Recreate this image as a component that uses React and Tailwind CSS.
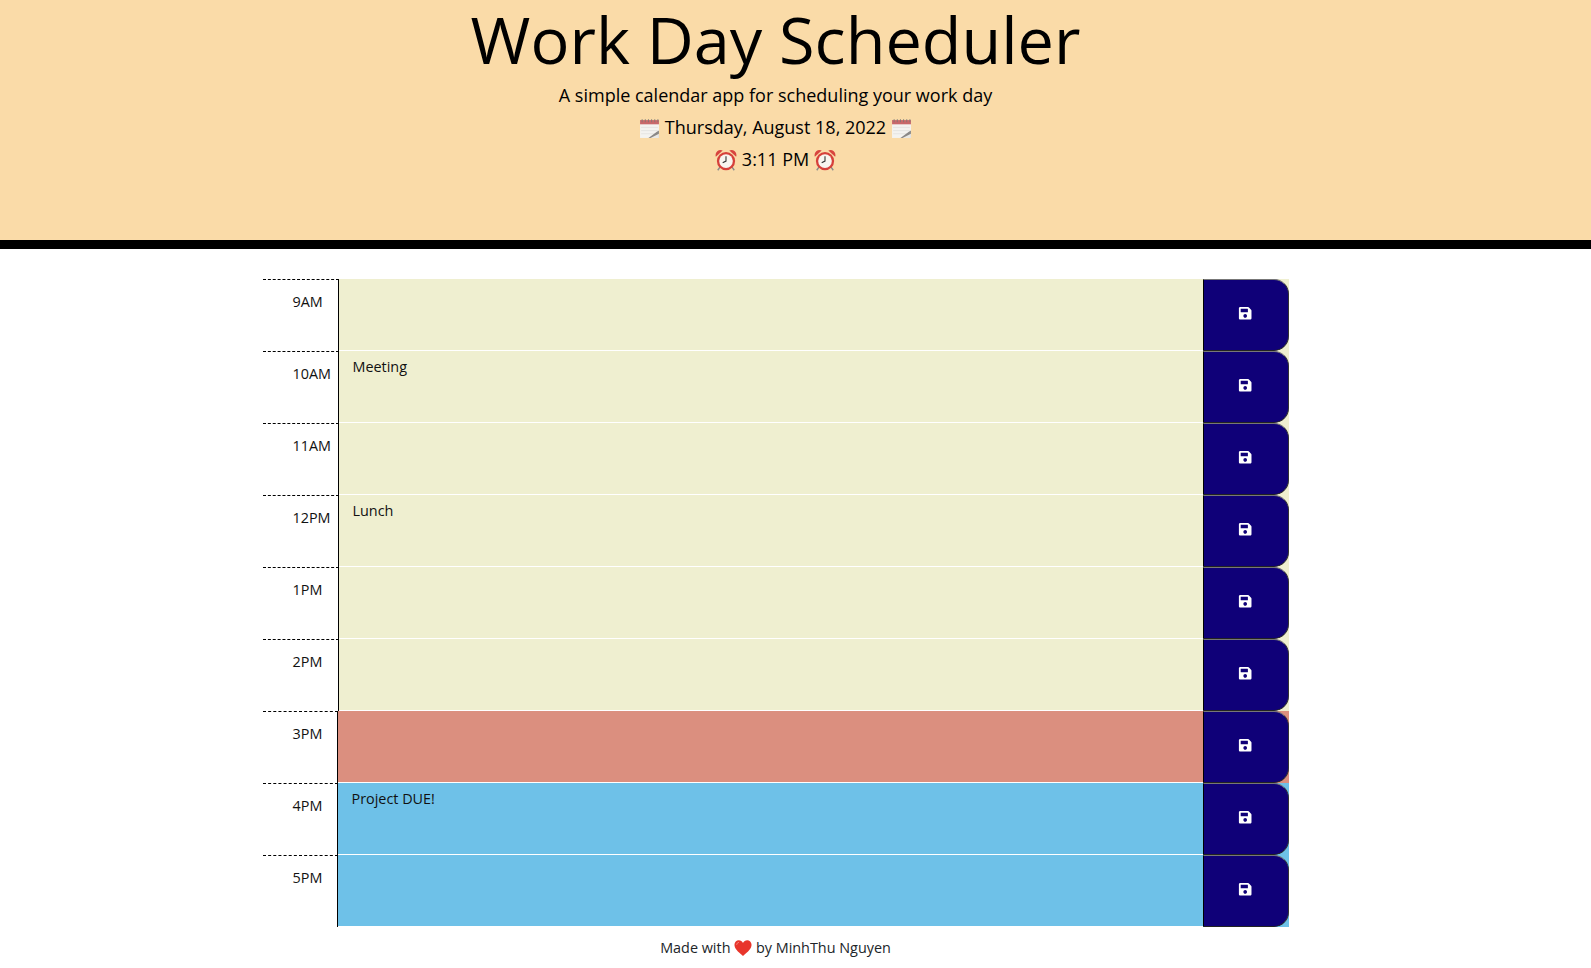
import React from 'react';
import { FaSave } from 'react-icons/fa';

const hours = [
  { label: '9AM', text: '', color: 'bg-[#efefd0]', labelWidth: 'w-[76px]' },
  { label: '10AM', text: 'Meeting', color: 'bg-[#efefd0]', labelWidth: 'w-[76px]' },
  { label: '11AM', text: '', color: 'bg-[#efefd0]', labelWidth: 'w-[76px]' },
  { label: '12PM', text: 'Lunch', color: 'bg-[#efefd0]', labelWidth: 'w-[76px]' },
  { label: '1PM', text: '', color: 'bg-[#efefd0]', labelWidth: 'w-[76px]' },
  { label: '2PM', text: '', color: 'bg-[#efefd0]', labelWidth: 'w-[76px]' },
  { label: '3PM', text: '', color: 'bg-[#db8f7f]', labelWidth: 'w-[75px]' },
  { label: '4PM', text: 'Project DUE!', color: 'bg-[#6ec1e8]', labelWidth: 'w-[75px]' },
  { label: '5PM', text: '', color: 'bg-[#6ec1e8]', labelWidth: 'w-[75px]' },
];

function CalendarIcon({ className }) {
  return (
    <svg viewBox="0 0 20 20" className={`inline-block w-[21px] h-[21px] align-[-5px] ${className}`}>
      <rect x="1" y="3" width="18" height="16" fill="#f4f3f0" />
      <rect x="1" y="2" width="18" height="4" fill="#c9686a" />
      <path d="M2 9h16M2 12h16M2 15h16" stroke="#dedcd8" strokeWidth="0.6" />
      <path d="M3 1v3M6 1v3M9 1v3M12 1v3M15 1v3M18 1v3" stroke="#777" strokeWidth="0.7" />
      <path d="M9 19l8-6 2-1v7z" fill="#8a8886" />
      <path d="M11 19l8-4v4z" fill="#e9e8e4" />
    </svg>
  );
}

function ClockIcon({ className }) {
  return (
    <svg viewBox="0 0 20 20" className={`inline-block w-[22px] h-[22px] align-[-5px] ${className}`}>
      <path d="M0.800 7a4.600 4.600 0 0 1 6.200-5.700zM19.200 7a4.600 4.600 0 0 0-6.200-5.700z" fill="#d8453f" />
      <path d="M4.500 16.500l-2 2.800M15.500 16.500l2 2.800" stroke="#8b8b8b" strokeWidth="1.300" />
      <circle cx="10" cy="11" r="8.300" fill="#d6403a" />
      <circle cx="10" cy="11" r="6.200" fill="#f8f5ef" />
      <path d="M10 6.500V11l-3 1.500" fill="none" stroke="#333" strokeWidth="1" />
    </svg>
  );
}

function HeartIcon() {
  return (
    <svg viewBox="0 0 20 20" className="inline-block w-[18px] h-[18px] align-[-4px]">
      <path d="M10 19C4 14 0.500 10.500 0.500 6.500 0.500 3.500 2.800 1.500 5.300 1.500 7.300 1.500 9 2.500 10 4.500 11 2.500 12.700 1.500 14.700 1.500 17.200 1.500 19.500 3.500 19.500 6.500 19.500 10.500 16 14 10 19z" fill="#e8352b" />
      <path d="M3 6.500c0-1.500 1-2.500 2.500-2.700" fill="none" stroke="#f58f86" strokeWidth="1" />
    </svg>
  );
}

function HourRow({ hour }) {
  return (
    <div className="flex h-[72px]">
      <div className={`${hour.labelWidth} shrink-0 border-solid border-t border-r border-black [border-top-style:dashed] pl-[30px] pt-[11px] text-[14.400px] leading-[21.600px] text-[#111]`}>
        {hour.label}
      </div>
      <div className={`flex flex-1 ${hour.color}`}>
        <textarea
          readOnly
          value={hour.text}
          className="flex-1 h-full resize-none bg-transparent border-b border-b-white pl-[14px] pt-[5px] text-[14.400px] leading-[21.600px] text-[#111] outline-none"
        />
        <button className="w-[86px] shrink-0 h-full flex items-center justify-center pb-[3px] bg-[#0f0078] border-l border-l-black border-t border-t-[#777] border-b border-b-[#222] border-r border-r-[#333] rounded-r-[15px] text-white text-[14.400px]">
          <FaSave />
        </button>
      </div>
    </div>
  );
}

export default function App() {
  return (
    <div className="font-['Open_Sans',sans-serif] bg-white min-h-[968px]">
      <header className="h-[249px] bg-[#fadba8] border-b-[9px] border-b-black text-center text-black pr-10">
        <h1 className="text-[64.800px] leading-[76.800px] font-normal pt-[1px]">Work Day Scheduler</h1>
        <p className="text-[18px] leading-[32px] mt-[1px]">A simple calendar app for scheduling your work day</p>
        <p className="text-[18px] leading-[32px]"><CalendarIcon className="ml-[-1px]" /> Thursday, August 18, 2022 <CalendarIcon className="mr-[-1px]" /></p>
        <p className="text-[18px] leading-[32px]"><ClockIcon className="ml-[-2px]" /> 3:11 PM <ClockIcon className="mr-[-2px]" /></p>
      </header>
      <main className="pr-10 pt-[30px]">
        <div className="mx-auto w-[1026px]">
          {hours.map((hour) => (
            <HourRow key={hour.label} hour={hour} />
          ))}
        </div>
        <footer className="text-center text-[14.400px] leading-[21.600px] text-[#212529] pt-[10px]">
          Made with <HeartIcon /> by MinhThu Nguyen
        </footer>
      </main>
    </div>
  );
}
